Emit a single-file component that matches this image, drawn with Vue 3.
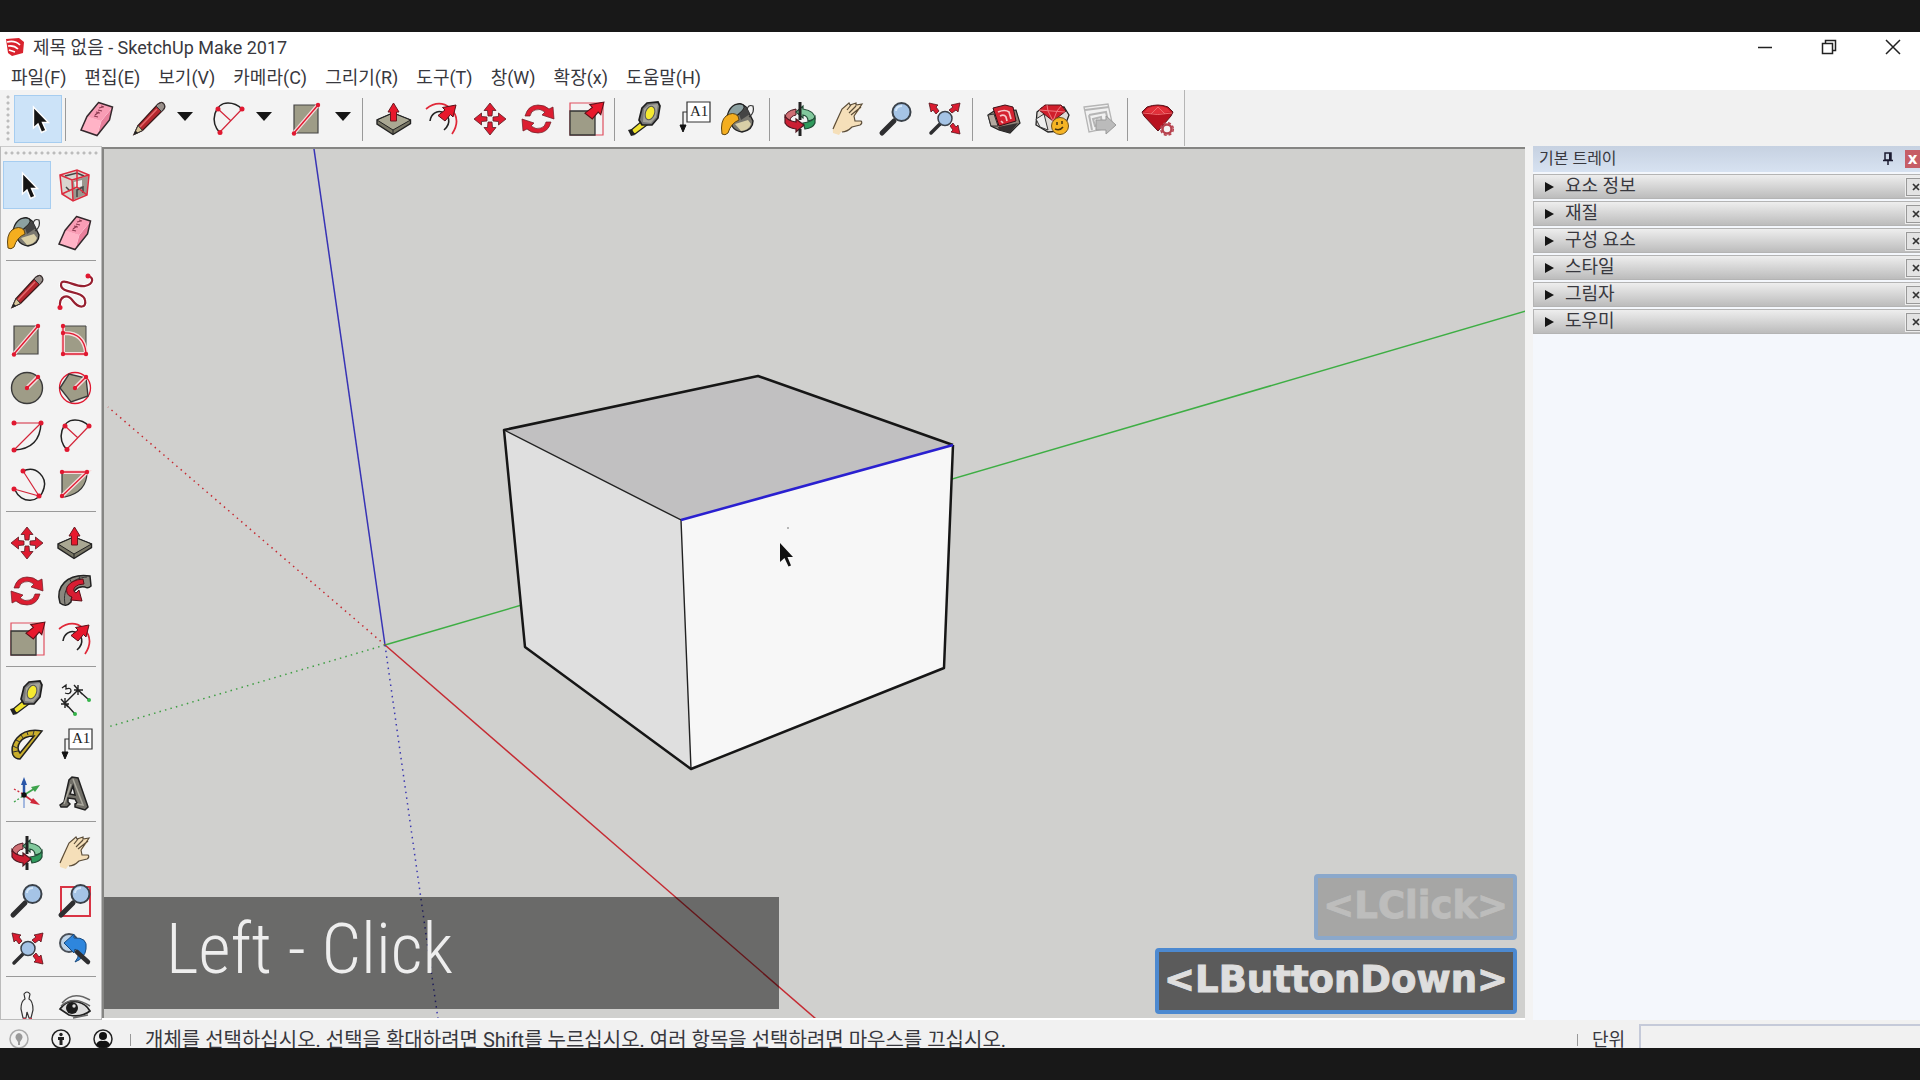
<script setup>
const menus = ['파일(F)', '편집(E)', '보기(V)', '카메라(C)', '그리기(R)', '도구(T)', '창(W)', '확장(x)', '도움말(H)']

const topGroups = [
  [{ icon: 'select', label: '선택', active: true }],
  [
    { icon: 'eraser', label: '지우개', wide: true },
    { icon: 'pencil', label: '선', menu: true },
    { icon: 'arc2', label: '호', menu: true },
    { icon: 'rect', label: '직사각형', menu: true },
  ],
  [
    { icon: 'push', label: '밀기/끌기' },
    { icon: 'offset', label: '오프셋' },
    { icon: 'move', label: '이동' },
    { icon: 'rotate', label: '회전' },
    { icon: 'scale', label: '배율' },
  ],
  [
    { icon: 'tape', label: '줄자' },
    { icon: 'label', label: '텍스트' },
    { icon: 'paint', label: '페인트통' },
  ],
  [
    { icon: 'orbit', label: '궤도' },
    { icon: 'hand', label: '이동 보기' },
    { icon: 'zoom', label: '확대/축소' },
    { icon: 'extents', label: '범위 확대' },
  ],
  [
    { icon: 'warehouse', label: '3D 웨어하우스' },
    { icon: 'extstore', label: '확장 웨어하우스' },
    { icon: 'layout', label: 'LayOut으로 보내기' },
  ],
  [{ icon: 'gem', label: '확장 관리자' }],
]

const sideGroups = [
  ['select', 'component', 'paint', 'eraser'],
  ['pencil', 'freehand', 'rect', 'rotrect', 'circle', 'polygon', 'arc', 'arc2', 'arc3', 'pie'],
  ['move', 'push', 'rotate', 'follow', 'scale', 'offset'],
  ['tape', 'dimension', 'protractor', 'label', 'axes', 'text3d'],
  ['orbit', 'hand', 'zoom', 'zoomwin', 'extents', 'previous'],
  ['person', 'eye'],
]

const panels = ['요소 정보', '재질', '구성 요소', '스타일', '그림자', '도우미']
</script>

<template>
  <svg class="defs" aria-hidden="true">
    <defs>
      <symbol id="redarrow" viewBox="0 0 18 18" overflow="visible">
        <path d="M17 1 L14 13 L11.500 10.500 L6 17 L-1 11.500 L6 6 L3.500 3.500 Z" fill="#e8182c" stroke="#5a1018" stroke-width="1" />
      </symbol>
      <symbol id="select" viewBox="0 0 36 36">
        <path d="M13.500 6 V27 L18 23 L21.500 31.500 L26 29.500 L22.500 21.500 H28.500 Z" fill="#151515" stroke="#fff" stroke-width="1.400" />
      </symbol>
      <symbol id="eraser" viewBox="0 0 36 36">
        <path d="M19.500 1.500 L33.500 6 L30.500 19 L18 34.500 L2 29 L8 15.500 Z" fill="#f99db5" />
        <path d="M8 15.500 L22 20 L33.500 6 L30.500 19 L18 34.500 L22 20" fill="#e87f9b" stroke="#fcd" stroke-width="1" />
        <path d="M8 15.500 L19.500 1.500 L33.500 6 L22 20 Z" fill="#f99db5" />
        <path d="M8 15.500 L22 20 L18 34.500 L2 29 Z" fill="#ffb3c6" />
        <path d="M19.500 1.500 L33.500 6 L30.500 19 L18 34.500 L2 29 L8 15.500 Z" fill="none" stroke="#33282c" stroke-width="1.500" />
        <path d="M16 14 l4 -3 M17 11 l4 1 M19 9 l4 1 M20 7 l4 -1 M22 5 l3 1 M15 15 l4 1" stroke="#8c3a50" stroke-width="1.200" />
      </symbol>
      <symbol id="pencil" viewBox="0 0 36 36">
        <path d="M3 33.500 L7 24.500 L27 3 Q31 0 33 3 Q35 6 32 9 L11.500 29.500 Z" fill="#b5262d" stroke="#3a1a1a" stroke-width="1.300" />
        <path d="M3 33.500 L7 24.500 L11.500 29.500 Z" fill="#d9c79c" stroke="#333" />
        <path d="M3 33.500 L4.600 29.500 L7 32 Z" fill="#222" />
        <path d="M25 5 L27 3 Q31 0 33 3 Q35 6 32 9 L30.500 10.500 Z" fill="#9a8f8a" stroke="#333" />
        <path d="M9 26 L26 8" stroke="#e2686a" stroke-width="1.500" />
      </symbol>
      <symbol id="freehand" viewBox="0 0 36 36" overflow="visible">
        <path d="M3 33 C2 22 10 19 16 27 C22 35 30 34 28 26 C26 16 4 20 4 11 C4 2 19 14 28 12 C37 10 37 3 31 2" fill="none" stroke="#fff" stroke-width="4" />
        <path d="M3 33 C2 22 10 19 16 27 C22 35 30 34 28 26 C26 16 4 20 4 11 C4 2 19 14 28 12 C37 10 37 3 31 2" fill="none" stroke="#962030" stroke-width="2.200" />
        <g fill="#e01830"><circle cx="3" cy="33.500" r="2.500" /><circle cx="31" cy="2" r="2.500" /></g>
      </symbol>
      <symbol id="rect" viewBox="0 0 36 36">
        <path d="M5 4 H29 V32 H5 Z" fill="#9e9c87" stroke="#444" stroke-width="1.200" />
        <path d="M5 32 L29 4" stroke="#f6dcdc" stroke-width="4" />
        <path d="M5 32 L29 4" stroke="#e01830" stroke-width="1.400" />
        <g fill="#e01830"><circle cx="5" cy="32.500" r="2.200" /><circle cx="29" cy="4" r="2.200" /></g>
      </symbol>
      <symbol id="rotrect" viewBox="0 0 36 36">
        <path d="M6 4 H29 V32 H6 Z" fill="#9e9c87" stroke="#444" />
        <path d="M6 11 Q27 10 29 31 M6 4 V32 H29" fill="none" stroke="#f6dcdc" stroke-width="4" />
        <path d="M6 11 Q27 10 29 31 M6 4 V32 H29" fill="none" stroke="#e01830" stroke-width="1.300" />
        <g fill="#e01830"><circle cx="6" cy="4" r="2.200" /><circle cx="6" cy="11" r="2.200" /><circle cx="6" cy="32" r="2.200" /><circle cx="29" cy="32" r="2.200" /></g>
      </symbol>
      <symbol id="circle" viewBox="0 0 36 36">
        <circle cx="18" cy="18" r="15.500" fill="#9e9c87" stroke="#3a3a3a" stroke-width="1.400" />
        <path d="M18 18 L29 7" stroke="#f6dcdc" stroke-width="4.500" />
        <path d="M18 18 L29 7" stroke="#e01830" stroke-width="1.500" />
        <g fill="#e01830"><circle cx="18" cy="18" r="2.200" /><circle cx="29" cy="7" r="2.200" /></g>
      </symbol>
      <symbol id="polygon" viewBox="0 0 36 36">
        <circle cx="18" cy="18" r="15.500" fill="none" stroke="#e01830" stroke-width="1.300" />
        <path d="M3 18 L12 4 L29 8 L31 26 L14 32 Z" fill="#9e9c87" stroke="#3a3a3a" stroke-width="1.400" />
        <path d="M18 18 L29 7" stroke="#f6dcdc" stroke-width="4.500" />
        <path d="M18 18 L29 7" stroke="#e01830" stroke-width="1.500" />
        <g fill="#e01830"><circle cx="18" cy="18" r="2.200" /><circle cx="29" cy="7" r="2.200" /></g>
      </symbol>
      <symbol id="arc" viewBox="0 0 36 36">
        <path d="M32 5 Q31 31 5 32" fill="none" stroke="#222" stroke-width="1.500" />
        <path d="M5 5 H32 L5 32" fill="none" stroke="#d3263a" stroke-width="1.200" />
        <g fill="#e01830"><circle cx="5" cy="5" r="2.500" /><circle cx="32" cy="5" r="2.500" /><circle cx="5" cy="32" r="2.500" /></g>
      </symbol>
      <symbol id="arc2" viewBox="0 0 36 36">
        <path d="M10 32 C-1 20 5 2 18 2 Q26 2 32 8" fill="none" stroke="#222" stroke-width="1.500" />
        <path d="M8 8 L20.500 19.500 M32 8 L10 31" fill="none" stroke="#d3263a" stroke-width="1.200" />
        <g fill="#e01830"><circle cx="8" cy="8" r="2.500" /><circle cx="32" cy="8" r="2.500" /><circle cx="10" cy="31.500" r="2.500" /></g>
      </symbol>
      <symbol id="arc3" viewBox="0 0 36 36" overflow="visible">
        <path d="M14 5 C28 -1 38 12 35 22 C31 38 12 38 6 24" fill="none" stroke="#222" stroke-width="1.500" />
        <path d="M14 5 L30 30 L5 23" fill="none" stroke="#d3263a" stroke-width="1.200" />
        <g fill="#e01830"><circle cx="14" cy="5" r="2.500" /><circle cx="30" cy="30" r="2.500" /><circle cx="5" cy="23" r="2.500" /></g>
      </symbol>
      <symbol id="pie" viewBox="0 0 36 36">
        <path d="M5 6 H30 Q30 26 8 31 H5 Z" fill="#9e9c87" stroke="#333" stroke-width="1.200" />
        <path d="M4 6 H30 L5 30" fill="none" stroke="#f6dcdc" stroke-width="4" />
        <path d="M4 6 H30 L5 30" fill="none" stroke="#e01830" stroke-width="1.300" />
        <g fill="#e01830"><circle cx="5" cy="6" r="2.200" /><circle cx="30" cy="6" r="2.200" /><circle cx="5" cy="30" r="2.200" /></g>
      </symbol>
      <symbol id="push" viewBox="0 0 36 36">
        <path d="M1 19 L17 12 L34.500 19 V22.500 L17 33.500 L1 23 Z" fill="#777564" stroke="#222" stroke-width="1.400" />
        <path d="M1 19 L17 12 L34.500 19 L17 29 Z" fill="#aaa893" stroke="#222" />
        <path d="M17 29 V33" stroke="#222" />
        <path d="M17.500 2 L23 11 H20.500 V20 H14.500 V11 H12 Z" fill="#e8182c" stroke="#6a1820" />
      </symbol>
      <symbol id="offset" viewBox="0 0 36 36">
        <path d="M2 8 Q15 -2 26 7 Q38 18 28 33" fill="none" stroke="#e02838" stroke-width="1.700" />
        <path d="M6 20 C7 13 13 9 18 11 C25 13 28 22 20 29" fill="none" stroke="#222" stroke-width="1.600" />
        <use href="#redarrow" x="15" y="3" width="18" height="18" />
      </symbol>
      <symbol id="move" viewBox="0 0 36 36">
        <g fill="#df1b30" stroke="#5a1a22" stroke-width=".8">
          <path id="mv" d="M18 2 L24 9.500 H20.500 L20 15 H16 L15.500 9.500 H12 Z" />
          <use href="#mv" transform="rotate(90 18 18)" /><use href="#mv" transform="rotate(180 18 18)" /><use href="#mv" transform="rotate(270 18 18)" />
        </g>
      </symbol>
      <symbol id="rotate" viewBox="0 0 36 36">
        <g fill="#dc1d30" stroke="#6a1a22" stroke-width=".7">
          <path id="rt" d="M5 15 Q8 4 18 4 Q25 4 29 8 L33 6 L34 18 L22 14 L25 11 Q20 7 15 9 Q11 10 10 15 Z" />
          <use href="#rt" transform="rotate(180 18 18)" />
        </g>
      </symbol>
      <symbol id="scale" viewBox="0 0 36 36" overflow="visible">
        <path d="M2 2 H35 V34 H2 Z" fill="none" stroke="#e05060" stroke-width="1.200" />
        <path d="M2 10 H27 V34 H2 Z" fill="#9e9c87" stroke="#333" stroke-width="1.300" />
        <use href="#redarrow" x="18" y="0" width="19" height="19" />
      </symbol>
      <symbol id="follow" viewBox="0 0 36 36" overflow="visible">
        <path d="M3 30 C-2 14 10 0 33 3 L34 13 Q31 16 28 14 Q16 12 14 29 Q9 35 3 30 Z" fill="#8a877e" stroke="#222" stroke-width="1.500" />
        <path d="M8 31 C5 15 15 5 30 4 M12 5 l4 7 M22 2 l1 7" fill="none" stroke="#333" />
        <path d="M26 6 Q14 7 10 14 Q8 22 15 24 L14 27 L25 28 L22 17 L19 20 Q15 18 18 14 Q21 11 27 11 Z" fill="#d81c32" stroke="#5a1018" />
      </symbol>
      <symbol id="tape" viewBox="0 0 36 36">
        <path d="M3 30 L15 20 L20 24 L8 33 Z" fill="#f0e32c" stroke="#222" stroke-width="1.300" />
        <path d="M1 29 L5 28 L8 34 L4 35 Z" fill="#222" />
        <path d="M15 7 L20 2 L31 1 L33 5 L31 17 L25 24 L15 24 L12 19 Z" fill="#777" stroke="#1e1e1e" stroke-width="1.700" />
        <path d="M17 8 L22 4 L31 3 L29 16 L24 22 L16 21 Z" fill="#a5a49b" />
        <ellipse cx="23" cy="12" rx="4.500" ry="7" fill="#f5ea30" stroke="#555" transform="rotate(20 23 12)" />
      </symbol>
      <symbol id="dimension" viewBox="0 0 36 36">
        <path d="M8 23 L21 10 L32 20 M8 23 L18 34 M4 19 L11 27 M17 5 L25 14 M4 24 H12 M17 10 H26 M8 18 V28 M21 5 V15" fill="none" stroke="#222" stroke-width="1.400" />
        <path d="M5 8 L9 5 L9 9 Q14 7 14 11 Q13 15 8 13" fill="none" stroke="#222" stroke-width="1.300" />
        <g fill="#35b44a"><circle cx="32" cy="20" r="2" /><circle cx="18" cy="34" r="2" /></g>
      </symbol>
      <symbol id="protractor" viewBox="0 0 36 36">
        <path d="M33 3 Q17 0 8 10 Q1 18 4 27 Q6 31 11 31 Z M25 8 Q15 8 11 14 Q7 20 11 25 Z" fill="#c9ae2c" fill-rule="evenodd" stroke="#222" stroke-width="1.500" />
        <path d="M4 18 l4 2 M7 12 l4 2 M12 7 l2 3 M18 4 l1 3 M4 24 l5 -1 M25 3 l-1 4" stroke="#333" />
      </symbol>
      <symbol id="label" viewBox="0 0 36 36" overflow="visible">
        <path d="M12 1 H35 V21 H12 Z" fill="#fff" stroke="#333" stroke-width="1.200" />
        <text x="15" y="15" class="slab">A1</text>
        <path d="M12 11 H8 V25" fill="none" stroke="#333" stroke-width="1.200" />
        <path d="M5 24 H11 L8 31 Z" fill="#111" stroke="#111" />
      </symbol>
      <symbol id="axes" viewBox="0 0 36 36">
        <path d="M15 19 V5" stroke="#2a56a8" stroke-width="2.500" /><path d="M15 1 L18 9 H12 Z" fill="#2a56a8" />
        <path d="M15 19 L28 11" stroke="#3ea34c" stroke-width="1.700" /><path d="M31 9 L26 16 L22 11 Z" fill="#3ea34c" />
        <path d="M15 19 L25 26" stroke="#d0283a" stroke-width="1.700" /><path d="M31 29 L21 27 L24 22 Z" fill="#d0283a" />
        <path d="M15 22 V32" stroke="#88a5d8" stroke-width="1.500" /><path d="M5 13 L14 18" stroke="#d0283a" stroke-width="1.300" stroke-dasharray="2" /><path d="M5 26 L14 20" stroke="#3ea34c" stroke-width="1.300" stroke-dasharray="2" />
        <circle cx="15" cy="19" r="2.700" fill="#111" />
      </symbol>
      <symbol id="text3d" viewBox="0 0 36 36">
        <path d="M3 29 L7 26 L12 4 L15 1 L21 2 L30 28 L31 31 L28 34 L18 31 L18 28 L20 27 L18 23 L11 22 L11 26 L13 28 L10 31 L4 31 Z M13 18 L18 19 L16 10 Z" fill="#716f68" fill-rule="evenodd" stroke="#222" stroke-width="1.500" />
        <path d="M16 3 L26 29 L20 28 M7 28 L14 8" fill="none" stroke="#aaa89d" stroke-width="1.500" />
      </symbol>
      <symbol id="paint" viewBox="0 0 36 36" overflow="visible">
        <path d="M12 5 Q17 0 23 6 L30 20 Q30 29 19 31 Q12 30 9 25 Z" fill="#7a7870" stroke="#222" stroke-width="1.400" />
        <path d="M12 23 L25 19 L28 23 Q26 29 18 30 Z" fill="#d9cfa7" />
        <path d="M4 16 Q7 2 18 3 Q25 5 17 12 Q11 18 4 16 Z" fill="#8ca1a2" stroke="#222" stroke-width="1.300" />
        <path d="M16 13 L23 6 L27 13 L18 19 Z" fill="#444" />
        <path d="M24 9 Q25 3 30 5 Q32 12 26 16" fill="none" stroke="#333" stroke-width="1.200" />
        <path d="M-1 33 Q-3 20 3 15 Q10 10 15 15 L16 19 Q8 22 5 32 Q2 35 -1 33 Z" fill="#f4ae1f" stroke="#604613" />
      </symbol>
      <symbol id="orbit" viewBox="0 0 36 36">
        <path d="M14 8 Q3 10 3 17 L8 20 Q8 15 14 14 Z" fill="#cf6f74" stroke="#4d1820" />
        <path d="M14 11 L21 5 V8 Q33 10 33 18 L26 20 Q26 15 21 14 V17 Z" fill="#82c99d" stroke="#224c36" stroke-width="1.200" />
        <path d="M33 16 V22 Q31 27 23 28 L21 22 Q30 21 33 16 Z" fill="#2f9a5c" stroke="#224c36" stroke-width="1.200" />
        <path d="M3 15 V22 Q6 27 14 28 V31 L22 24 L14 18 V21 Q6 20 3 15 Z" fill="#cb1f33" stroke="#4d1820" stroke-width="1.200" />
        <path d="M18 1 V19 M18 28 V35" stroke="#222" stroke-width="3" />
      </symbol>
      <symbol id="hand" viewBox="0 0 36 36">
        <path d="M3 32 Q2 25 6 20 L12 8 L18 3 L19 5 L25 2 L26 4 L32 3 L31 7 L24 16 L25 20 L32 20 L32 23 L22 26 Q16 31 11 31 L9 34 Z" fill="#f5dfb9" />
        <path d="M3 28 L7 19 L12 8 L19 2 L20 4 L26 2 L26 4 L32 3 L24 15 M17 9 L21 4 M19 12 L26 5 M21 14 L31 6 M24 15 L25 20 L31 20 Q33 22 30 24 L22 26 Q17 31 12 31" fill="none" stroke="#5a4c38" stroke-width="1.200" />
      </symbol>
      <symbol id="zoom" viewBox="0 0 36 36">
        <path d="M16 20 L4 32" stroke="#2e2e30" stroke-width="5" stroke-linecap="round" />
        <circle cx="23.500" cy="11" r="9" fill="#a5c4e6" stroke="#3a4149" stroke-width="2" />
        <path d="M18 10 Q18 5 24 5" stroke="#d3e6f8" stroke-width="2" fill="none" />
      </symbol>
      <symbol id="zoomwin" viewBox="0 0 36 36">
        <path d="M4 4 H33 V33 H4 Z" fill="none" stroke="#d93444" stroke-width="2" />
        <use href="#zoom" width="36" height="36" />
      </symbol>
      <symbol id="smallarrow" viewBox="0 0 12 12"><path d="M11 1 L9 10 L7 8 L3 11 L0 8 L4 5 L2 3 Z" fill="#d91c30" stroke="#55141c" stroke-width=".8" /></symbol>
      <symbol id="extents" viewBox="0 0 36 36">
        <path d="M14 23 L5 32" stroke="#2e2e30" stroke-width="3.500" stroke-linecap="round" />
        <circle cx="19" cy="17.500" r="7" fill="#a5c4e6" stroke="#3a4149" stroke-width="1.500" />
        <use href="#smallarrow" x="23" y="1" width="12" height="12" />
        <use href="#smallarrow" x="2" y="1" width="12" height="12" transform="rotate(-90 8 7)" />
        <use href="#smallarrow" x="23" y="22" width="12" height="12" transform="rotate(90 29 28)" />
      </symbol>
      <symbol id="previous" viewBox="0 0 36 36">
        <circle cx="12" cy="12" r="9" fill="#bfd3e6" stroke="#4a5058" stroke-width="2" />
        <path d="M7 12 L17 3 V7 Q31 6 29 18 Q28 27 18 31 Q25 22 18 18 L17 22 Z" fill="#2e86dd" stroke="#174a80" />
        <path d="M20 21 L31 31" stroke="#2e2e30" stroke-width="4.500" stroke-linecap="round" />
      </symbol>
      <symbol id="component" viewBox="0 0 36 36">
        <path d="M3 8 L20 3 L32 8 L30 28 L16 34 L5 27 Z" fill="#d9d5cf" />
        <path d="M15 14 L31 9 L30 27 L16 33 Z" fill="#9a978e" />
        <path d="M8 9 L20 6 L27 9 M9 20 L13 24 M20 30 V23 L26 20 V26" fill="none" stroke="#444" stroke-width="1.500" />
        <path d="M17 15 L25 13 V19 L18 22 Z" fill="#eee" />
        <path d="M3 8 L20 3 L32 8 L30 28 L16 34 L5 27 Z M3 8 L15 13 L32 8 M15 13 L16 34 M20 3 V20 L5 27 M20 20 L30 28" fill="none" stroke="#dc2b3e" stroke-width="1.500" />
      </symbol>
      <symbol id="warehouse" viewBox="0 0 36 36">
        <path d="M3 14 L9 10 L31 9 L35 22 L25 32 L14 29 L6 25 Z" fill="#8f8378" stroke="#222" stroke-width="1.200" />
        <path d="M3 14 L9 13 L13 25 L6 25 Z" fill="#b5aaa0" stroke="#333" />
        <path d="M13 26 L33 22 L25 32 L14 29 Z" fill="#343030" />
        <path d="M8 7 L20 4 L28 6 L31 20 L14 25 Z" fill="#d52230" stroke="#3a1015" />
        <path d="M13 11 Q20 8 24 11 L26 18 M15 15 Q19 13 21 16 L22 20 M16 20 L18 22" fill="none" stroke="#f6c8ca" stroke-width="1.700" />
      </symbol>
      <symbol id="extstore" viewBox="0 0 36 36" overflow="visible">
        <path d="M4 11 L9 7 L31 6 L36 14 L30 30 L15 31 L3 24 Z" fill="#dedad6" stroke="#222" stroke-width="1.300" />
        <path d="M3 18 L11 13 L15 29 L7 26 Z" fill="#eee" stroke="#333" />
        <path d="M6 9 L12 4 L28 4 L33 10 L20 20 Z" fill="#d01e2b" stroke="#521219" />
        <path d="M6 9 L32 11 M14 4 L15 10 L20 20 L24 10 L28 5" fill="none" stroke="#f07a80" />
        <circle cx="27" cy="25" r="8.500" fill="#f6b424" stroke="#70521a" />
        <path d="M24 21 v3 M29 20 v3 M22 28 Q27 30 30 26" stroke="#443311" stroke-width="1.500" fill="none" />
      </symbol>
      <symbol id="layout" viewBox="0 0 36 36" overflow="visible">
        <path d="M3 6 L27 3 L32 26 L8 31 Z" fill="#f1f1f1" stroke="#b5b5b5" stroke-width="1.300" />
        <path d="M4 9 L28 6 M8 14 L25 11 L28 25 M8 14 L11 29 M12 18 L20 16 L21 23 L14 25 Z" fill="none" stroke="#b5b5b5" stroke-width="2" />
        <path d="M15 19 H25 V15 L35 24 L25 33 V29 H15 Z" fill="#bbb" stroke="#999" />
      </symbol>
      <symbol id="gem" viewBox="0 0 36 36">
        <path d="M2 11 L7 6 Q18 2 28 6 L33 11 L31 15 L18 30 L4 15 Z" fill="#b8121f" stroke="#5a1018" />
        <path d="M4 11 L8 7 Q18 3 27 7 L31 11 L18 13 Z" fill="#e2303a" />
        <path d="M3 12 Q18 15 32 12 M11 13 L18 6 L25 13" fill="none" stroke="#f06a6e" />
        <circle cx="27" cy="28" r="4.500" fill="none" stroke="#b7424e" stroke-width="2.500" />
        <circle cx="27" cy="28" r="6.300" fill="none" stroke="#b7424e" stroke-width="1.500" stroke-dasharray="3 2" />
      </symbol>
      <symbol id="person" viewBox="0 0 36 36">
        <path d="M15 4 Q18 0 21 4 L20 9 Q24 11 24 20 L22 28 H20 L18 22 L17 28 H14 L12 19 Q12 11 16 9 Z" fill="#f4f4f4" stroke="#333" stroke-width="1.200" />
        <path d="M14 29 h3 M20 29 h3" stroke="#c63a4c" stroke-width="2" />
      </symbol>
      <symbol id="eye" viewBox="0 0 36 36">
        <path d="M3 19 Q10 9 21 12 Q29 14 33 21 Q24 28 12 25 Z" fill="#ddd" stroke="#222" stroke-width="1.700" />
        <path d="M5 13 Q16 0 33 10 M4 16 Q16 5 33 16 M16 28 L31 25" fill="none" stroke="#666" stroke-width="1.500" />
        <circle cx="15" cy="18" r="6" fill="#1b1b1b" /><circle cx="17" cy="16" r="1.700" fill="#ddd" />
      </symbol>
    </defs>
  </svg>

  <div class="screen">
    <header class="titlebar">
      <svg class="logo" viewBox="0 0 20 20" aria-hidden="true">
        <path d="M1 2 L14 1 L19 5 L18 16 L7 19 L3 16 Z" fill="#d9232e" />
        <path d="M2 5 Q10 3 15 8 M3 9 Q9 8 13 12 M4 13 L10 15" fill="none" stroke="#fff" stroke-width="1.700" />
      </svg>
      <h1>제목 없음 - SketchUp Make 2017</h1>
      <div class="wincontrols">
        <button aria-label="최소화"><svg viewBox="0 0 16 16"><path d="M1 8.500 H15" /></svg></button>
        <button aria-label="이전 크기로"><svg viewBox="0 0 16 16"><path d="M1.500 4.500 H11.500 V14.500 H1.500 Z M4.500 4.500 V1.500 H14.500 V11.500 H11.500" /></svg></button>
        <button aria-label="닫기"><svg viewBox="0 0 16 16"><path d="M1 1 L15 15 M15 1 L1 15" /></svg></button>
      </div>
    </header>

    <nav class="menubar">
      <button v-for="m in menus" :key="m">{{ m }}</button>
    </nav>

    <div class="toolrow">
      <div class="toolbar">
        <span class="grip"></span>
        <div v-for="(g, i) in topGroups" :key="i" class="group" :class="{ tight: i === 2, loose: i > 2 }">
          <div v-for="t in g" :key="t.icon" class="tool" :class="{ wide: t.wide }">
            <button class="btn" :class="{ active: t.active }" :aria-label="t.label"><svg><use :href="'#' + t.icon" /></svg></button>
            <button v-if="t.menu" class="drop" :aria-label="t.label + ' 메뉴'"></button>
          </div>
        </div>
      </div>
    </div>

    <main class="work">
      <aside class="side">
        <div class="sidegrip"></div>
        <div v-for="(g, i) in sideGroups" :key="i" class="sidegroup">
          <button v-for="n in g" :key="n" class="btn" :class="{ active: n === 'select' }" :aria-label="n"><svg><use :href="'#' + n" /></svg></button>
        </div>
      </aside>

      <section class="canvas">
        <svg class="scene" viewBox="104 149 1421 869" preserveAspectRatio="xMinYMin slice" role="img" aria-label="상자 모델">
          <g fill="none" stroke-width="1.500">
            <path d="M385 645 L314 149" stroke="#3733b5" />
            <path d="M385 645 L1526 311" stroke="#3eae44" />
            <path d="M385 645 L816 1019" stroke="#c52b33" />
            <g stroke-dasharray="1.500 4.200">
              <path d="M385 645 L108 407" stroke="#c52b33" />
              <path d="M385 645 L108 727" stroke="#3f9e44" />
              <path d="M385 645 L438 1019" stroke="#3b38b0" />
            </g>
          </g>
          <path d="M504 430 L758 376 L953 445 L681 520 Z" fill="#c1c0c1" />
          <path d="M504 430 L681 520 L691 769 L525 647 Z" fill="#dfdfdf" />
          <path d="M681 520 L953 445 L944 668 L691 769 Z" fill="#f7f7f7" />
          <path d="M504 430 L681 520 L691 769" fill="none" stroke="#222" stroke-width="1.400" />
          <path d="M953 445 L944 668 L691 769 L525 647 L504 430 L758 376 L953 445" fill="none" stroke="#161616" stroke-width="2.500" stroke-linejoin="round" />
          <path d="M681 520 L953 445" stroke="#2a20d0" stroke-width="2.500" />
          <path d="M787 528 h2" stroke="#777" />
          <path d="M780 543 V562 L784.500 558 L788.500 566.500 L791 565.500 L787.500 557 H793 Z" fill="#111" />
        </svg>
        <div class="caption">Left - Click</div>
        <div class="keys">
          <kbd class="faded">&lt;LClick&gt;</kbd>
          <kbd>&lt;LButtonDown&gt;</kbd>
        </div>
      </section>

      <aside class="tray">
        <div class="trayhead">
          <h2>기본 트레이</h2>
          <button class="pin" aria-label="고정"><svg viewBox="0 0 12 14"><path d="M3 1 H9 V8 H3 Z M1 8.500 H11 M6 9 V13" fill="none" stroke="#1b1b30" stroke-width="1.500" /><path d="M7 1 H9 V8 H7 Z" fill="#1b1b30" /></svg></button>
          <button class="shut" aria-label="트레이 닫기">x</button>
        </div>
        <div v-for="p in panels" :key="p" class="panel">
          <button class="title"><span class="tri"></span>{{ p }}</button>
          <button class="x" :aria-label="p + ' 닫기'"><svg viewBox="0 0 8 8"><path d="M1 1 L7 7 M7 1 L1 7" stroke="#333" stroke-width="1.700" /></svg></button>
        </div>
      </aside>
    </main>

    <footer class="status">
      <svg viewBox="0 0 20 20"><circle cx="10" cy="10" r="9" fill="none" stroke="#aaa" stroke-width="1.500" /><path d="M10 4 a4 4 0 0 1 3 6 l-2 3 v3 h-2 v-3 l-2 -3 a4 4 0 0 1 3 -6" fill="#999" /></svg>
      <svg viewBox="0 0 20 20"><circle cx="10" cy="10" r="9" fill="none" stroke="#222" stroke-width="1.500" /><circle cx="10" cy="5.500" r="1.700" fill="#222" /><path d="M7 8 H13 V11 H11.500 V16 H8.500 V11 H7 Z" fill="#222" /></svg>
      <svg viewBox="0 0 20 20"><circle cx="10" cy="10" r="9" fill="none" stroke="#222" stroke-width="1.500" /><circle cx="10" cy="7" r="4" fill="#111" /><path d="M3 16 Q5 11 10 12 Q15 11 17 16 Q10 22 3 16" fill="#111" /></svg>
      <i></i>
      <p>개체를 선택하십시오. 선택을 확대하려면 Shift를 누르십시오. 여러 항목을 선택하려면 마우스를 끄십시오.</p>
      <i></i>
      <label for="measure">단위</label>
      <input id="measure" type="text" />
    </footer>
  </div>
</template>

<style>
body {
  background: #181818;
}
</style>

<style scoped>
.defs {
  position: absolute;
  width: 0;
  height: 0;
}
.slab {
  font: 15px "Liberation Serif", serif;
  fill: #222;
}
.screen {
  box-sizing: border-box;
  height: 100vh;
  padding: 32px 0;
  display: flex;
  flex-direction: column;
  background: #181818;
  color: #38383e;
  font: 18px/24px Roboto, "Noto Sans CJK KR", sans-serif;
}
button {
  border: 0;
  padding: 0;
  margin: 0;
  background: none;
  color: inherit;
  font: inherit;
  display: block;
}
h1,
h2,
p {
  margin: 0;
  font: inherit;
}
.titlebar {
  height: 30px;
  flex: none;
  background: #fff;
  display: flex;
  align-items: center;
}
.titlebar h1 {
  padding-top: 2px;
}
.logo {
  width: 20px;
  height: 20px;
  margin: 0 8px 0 5px;
}
.wincontrols {
  margin-left: auto;
  display: flex;
}
.wincontrols button {
  width: 64px;
  height: 28px;
  display: grid;
  place-items: center;
}
.wincontrols button:last-child {
  width: 54px;
  margin-left: 5px;
}
.wincontrols svg {
  width: 16px;
  height: 16px;
  fill: none;
  stroke: #222;
  stroke-width: 1.500;
}
.menubar {
  height: 28px;
  flex: none;
  background: #fff;
  display: flex;
  gap: 18px;
  padding-left: 11px;
}
.menubar button {
  height: 28px;
  line-height: 32px;
  white-space: nowrap;
}
.toolrow {
  height: 56px;
  flex: none;
  background: #f1f1f1;
  display: flex;
}
.toolbar {
  display: flex;
  padding: 5px 2px 3px 0;
  background: #f3f3f3;
  border-right: 1px solid #b5b5b5;
}
.grip {
  width: 4px;
  margin: 0 4px 0 6px;
  background: radial-gradient(circle at 2px 2px, #bcbcbc 1px, transparent 2px) 0 0 / 4px 6px;
}
.group {
  display: flex;
}
.group + .group::before {
  content: "";
  width: 1px;
  margin: 3px 4px 2px 3px;
  background: #999;
}
.group + .tight::before {
  margin-left: 0;
  margin-right: 7px;
}
.group + .loose::before {
  margin-left: 4px;
  margin-right: 6px;
}
.tool {
  display: flex;
}
.wide {
  padding: 0 4px 0 3px;
}
.btn {
  width: 48px;
  height: 48px;
  box-sizing: border-box;
  display: grid;
  place-items: center;
}
.btn svg {
  width: 36px;
  height: 36px;
  overflow: visible;
}
.btn.active {
  background: #cce3f8;
  border: 1px solid #a6cdf0;
}
.drop {
  width: 31px;
  height: 42px;
  display: flex;
  align-items: center;
  padding-left: 4px;
}
.drop::before {
  content: "";
  border: 8px solid transparent;
  border-top: 9px solid #151515;
  border-bottom: 0;
}
.work {
  flex: 1;
  min-height: 0;
  display: flex;
  background: #f3f3f3;
}
.side {
  box-sizing: border-box;
  width: 102px;
  flex: none;
  overflow: hidden;
  border: 1px solid #bbb;
  border-top-color: #ccc;
  padding: 0 2px;
}
.sidegrip {
  height: 4px;
  margin: 4px 0 6px 1px;
  background: radial-gradient(circle at 2px 2px, #bcbcbc 1px, transparent 2px) 0 0 / 6px 4px;
}
.sidegroup {
  display: grid;
  grid-template-columns: 48px 48px;
}
.sidegroup + .sidegroup::before {
  content: "";
  grid-column: 1 / -1;
  height: 1px;
  margin: 3px 3px 7px;
  background: #999;
}
.canvas {
  flex: 1;
  min-width: 0;
  position: relative;
  overflow: hidden;
  background: #d0d0ce;
  border: 2px solid #858583;
  border-width: 2px 0 0 2px;
  box-shadow: 0 2px #fff;
  margin: 1px 0 2px;
}
.scene {
  display: block;
  width: 100%;
  height: 100%;
}
.caption {
  position: absolute;
  left: 0;
  bottom: 9px;
  box-sizing: border-box;
  width: 48%;
  max-width: 675px;
  height: 112px;
  padding-left: 62px;
  background: rgba(0, 0, 0, 0.49);
  color: #eee;
  font: 300 70px/104px "Roboto Condensed", "Open Sans Condensed Light", sans-serif;
  white-space: nowrap;
}
.keys {
  position: absolute;
  right: 8px;
  bottom: 4px;
  display: flex;
  flex-direction: column;
  align-items: flex-end;
  gap: 8px;
}
.keys kbd {
  box-sizing: border-box;
  height: 66px;
  padding: 0 5px;
  border: 4px solid #4c89d0;
  border-radius: 4px;
  background: #5b5b5b;
  color: #dedede;
  font: bold 37px/56px "DejaVu Sans", sans-serif;
  -webkit-text-stroke: 1px;
}
.keys .faded {
  border-color: #8ba8cb;
  background: #a6a6a5;
  color: #bdbdbc;
}
.tray {
  width: 387px;
  flex: none;
  margin-left: 8px;
  overflow: hidden;
  background: #f4f7fc;
}
.trayhead {
  height: 26px;
  display: flex;
  align-items: center;
  padding-left: 6px;
  margin-bottom: 2px;
  background: linear-gradient(#c6d1e1, #d7e2f1);
}
.trayhead h2 {
  flex: 1;
  font-size: 16px;
}
.pin {
  width: 12px;
  height: 14px;
  margin-right: 11px;
}
.pin svg {
  display: block;
}
.shut {
  width: 15px;
  height: 18px;
  background: #c65d66;
  color: #fff;
  font: bold 15px/15px "DejaVu Sans", sans-serif;
}
.panel {
  box-sizing: border-box;
  height: 25px;
  margin-bottom: 2px;
  display: flex;
  align-items: center;
  border: 1px solid #b4b4b4;
  border-right: 0;
  background: linear-gradient(#eee, #bcbcbc);
}
.panel .title {
  flex: 1;
  display: flex;
  align-items: center;
  height: 23px;
  padding-bottom: 2px;
  line-height: 20px;
}
.tri {
  margin: 2px 11px 0 11px;
  border: 5px solid transparent;
  border-left: 9px solid #151515;
  border-right: 0;
}
.x {
  width: 14px;
  height: 18px;
  border: 1px solid #999;
  border-right: 0;
  outline: 1px solid #eee;
  background: #e3e3e3;
  display: grid;
  place-items: center end;
}
.x svg {
  width: 8px;
  height: 8px;
}
.status {
  height: 28px;
  flex: none;
  overflow: hidden;
  display: flex;
  background: #f1f1f1;
}
.status > svg {
  width: 20px;
  height: 20px;
  margin: 9px 14px 0 9px;
  flex: none;
}
.status > svg + svg {
  margin-left: 8px;
}
.status i {
  width: 1px;
  height: 12px;
  margin: 14px 14px 0 3px;
  background: #999;
}
.status p {
  flex: 1;
  font-size: 20px;
  white-space: nowrap;
}
.status p,
.status label {
  line-height: 40px;
}
.status input {
  box-sizing: border-box;
  width: 281px;
  height: 30px;
  margin: 4px 0 0 14px;
  border: 2px solid #c5cad9;
  border-right: 0;
  background: #f1f1f1;
}
</style>
